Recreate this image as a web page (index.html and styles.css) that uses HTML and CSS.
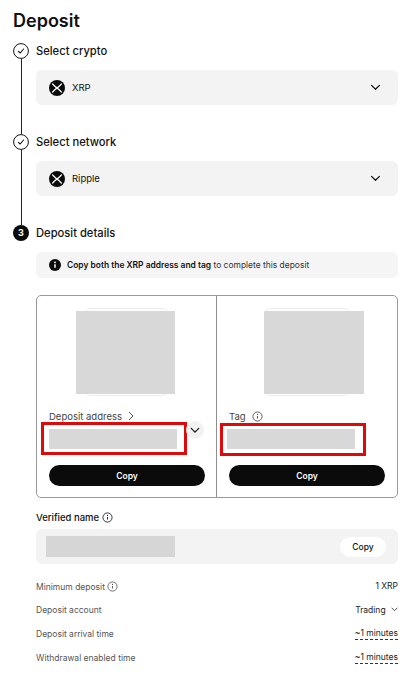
FILE: index.html
```html
<!DOCTYPE html>
<html lang="en">
<head>
    <meta charset="UTF-8">
    <meta name="viewport" content="width=device-width, initial-scale=1.0">
    <title>Deposit</title>
    <link rel="stylesheet" href="styles.css">
</head>
<body>
    <svg class="icon-defs" width="0" height="0">
        <symbol id="chevron" viewBox="0 0 12 8"><path d="M1.5 1.5 6 6l4.5-4.5" fill="none" stroke="currentColor" stroke-width="1.4" stroke-linecap="round" stroke-linejoin="round"/></symbol>
        <symbol id="check" viewBox="0 0 16 16"><circle cx="8" cy="8" r="7.4" fill="#fff" stroke="#111" stroke-width="1"/><path d="M5.4 8.3 7.2 10l3.4-4" fill="none" stroke="#111" stroke-width="1.1" stroke-linecap="round" stroke-linejoin="round"/></symbol>
        <symbol id="xrp" viewBox="0 0 16 16"><circle cx="8" cy="8" r="8" fill="#0b0b0b"/><path d="M3.6 4 6.6 7a2 2 0 0 0 2.8 0l3-3M3.6 12l3-3a2 2 0 0 1 2.8 0l3 3" fill="none" stroke="#fff" stroke-width="1.2" stroke-linecap="round"/></symbol>
        <symbol id="info" viewBox="0 0 12 12"><circle cx="6" cy="6" r="5" fill="none" stroke="currentColor" stroke-width="0.9"/><path d="M6 5.4v2.8" stroke="currentColor" stroke-width="1"/><circle cx="6" cy="3.7" r="0.6" fill="currentColor"/></symbol>
    </svg>

    <h1 class="page-title">Deposit</h1>

    <section class="step">
        <div class="step-marker">
            <svg class="step-icon"><use href="#check"/></svg>
            <div class="step-line"></div>
        </div>
        <div class="step-body step-body-select">
            <h2 class="step-title">Select crypto</h2>
            <div class="select-box">
                <svg class="coin-icon"><use href="#xrp"/></svg>
                <span class="select-text">XRP</span>
                <svg class="select-chevron"><use href="#chevron"/></svg>
            </div>
        </div>
    </section>

    <section class="step">
        <div class="step-marker">
            <svg class="step-icon"><use href="#check"/></svg>
            <div class="step-line"></div>
        </div>
        <div class="step-body step-body-select">
            <h2 class="step-title">Select network</h2>
            <div class="select-box">
                <svg class="coin-icon"><use href="#xrp"/></svg>
                <span class="select-text">Ripple</span>
                <svg class="select-chevron"><use href="#chevron"/></svg>
            </div>
        </div>
    </section>

    <section class="step">
        <div class="step-marker">
            <div class="step-number">3</div>
        </div>
        <div class="step-body">
            <h2 class="step-title">Deposit details</h2>
            <div class="notice">
                <svg class="notice-icon" viewBox="0 0 12 12"><circle cx="6" cy="6" r="6" fill="#0b0b0b"/><path d="M6 5.3v3.4" stroke="#fff" stroke-width="1.5"/><circle cx="6" cy="3.4" r="0.9" fill="#fff"/></svg>
                <span><b>Copy both the XRP address and tag</b> to complete this deposit</span>
            </div>

            <div class="address-card">
                <div class="address-col">
                    <div class="qr-wrap">
                        <div class="qr-frame qr-frame-left"></div>
                        <div class="qr-mask"></div>
                    </div>
                    <div class="field-label">Deposit address
                        <svg class="label-arrow" viewBox="0 0 6 10"><path d="M1 1l4 4-4 4" fill="none" stroke="currentColor" stroke-width="0.9"/></svg>
                    </div>
                    <div class="field-row">
                        <div class="field-value"></div>
                        <div class="red-box"></div>
                        <div class="expand-btn"><svg class="expand-chevron"><use href="#chevron"/></svg></div>
                    </div>
                    <button class="copy-btn">Copy</button>
                </div>
                <div class="address-col address-col-right">
                    <div class="qr-wrap">
                        <div class="qr-frame qr-frame-right"></div>
                        <div class="qr-mask"></div>
                    </div>
                    <div class="field-label">Tag
                        <svg class="info-icon"><use href="#info"/></svg>
                    </div>
                    <div class="field-row">
                        <div class="field-value"></div>
                        <div class="red-box"></div>
                    </div>
                    <button class="copy-btn">Copy</button>
                </div>
            </div>

            <div class="verified-label">Verified name <svg class="info-icon"><use href="#info"/></svg></div>
            <div class="verified-box">
                <div class="verified-value"></div>
                <button class="copy-pill">Copy</button>
            </div>

            <div class="info-rows">
                <div class="info-row">
                    <span class="info-key">Minimum deposit <svg class="info-icon"><use href="#info"/></svg></span>
                    <span class="info-val">1 XRP</span>
                </div>
                <div class="info-row">
                    <span class="info-key">Deposit account</span>
                    <span class="info-val">Trading <svg class="mini-chevron"><use href="#chevron"/></svg></span>
                </div>
                <div class="info-row">
                    <span class="info-key">Deposit arrival time</span>
                    <span class="info-val dashed">~1 minutes</span>
                </div>
                <div class="info-row">
                    <span class="info-key">Withdrawal enabled time</span>
                    <span class="info-val dashed">~1 minutes</span>
                </div>
            </div>
        </div>
    </section>
</body>
</html>
```

FILE: styles.css
```css
* {
    box-sizing: border-box;
}

body {
    margin: 0;
    padding: 9px 13px 14px 13px;
    background-color: #ffffff;
    color: #111111;
    font-family: 'Inter', 'Liberation Sans', sans-serif;
}

.icon-defs {
    position: absolute;
}

.page-title {
    margin: 0 0 11px 0;
    height: 23px;
    line-height: 23px;
    font-size: 18px;
    font-weight: 600;
}

.step {
    display: flex;
    gap: 7px;
}

.step-marker {
    width: 16px;
    flex-shrink: 0;
    display: flex;
    flex-direction: column;
    align-items: center;
}

.step-icon {
    width: 16px;
    height: 16px;
    flex-shrink: 0;
}

.step-line {
    width: 1px;
    flex: 1;
    background-color: #222222;
}

.step-number {
    width: 16px;
    height: 16px;
    border-radius: 50%;
    background-color: #0b0b0b;
    color: #ffffff;
    font-size: 9px;
    font-weight: 700;
    line-height: 16px;
    text-align: center;
}

.step-body {
    flex: 1;
    min-width: 0;
}

.step-body-select {
    padding-bottom: 29px;
}

.step-title {
    margin: 0 0 11px 0;
    height: 16px;
    line-height: 16px;
    font-size: 11.2px;
    font-weight: 500;
}

.select-box {
    height: 35px;
    display: flex;
    align-items: center;
    padding: 0 17px 0 13px;
    background-color: #f3f3f3;
    border-radius: 6px;
}

.coin-icon {
    width: 16px;
    height: 16px;
    margin-right: 7px;
}

.select-text {
    font-size: 9.5px;
    font-weight: 400;
}

.select-chevron {
    width: 11px;
    height: 7px;
    margin-left: auto;
}

.notice {
    height: 26px;
    display: flex;
    align-items: center;
    gap: 6px;
    padding-left: 13px;
    background-color: #f5f5f5;
    border-radius: 6px;
    font-size: 8.45px;
    color: #333333;
    white-space: nowrap;
}

.notice b {
    font-weight: 600;
    color: #111111;
}

.notice-icon {
    width: 12px;
    height: 12px;
    flex-shrink: 0;
}

.address-card {
    display: flex;
    height: 203px;
    margin-top: 17px;
    border: 1px solid #9a9a9a;
    border-radius: 5px;
}

.address-col {
    width: 180px;
    padding: 12px 11px 0 12px;
    border-right: 1px solid #8f8f8f;
}

.address-col-right {
    flex: 1;
    border-right: none;
    padding: 12px 12px 0 12px;
}

.qr-wrap {
    position: relative;
    height: 88px;
}

.qr-frame {
    position: absolute;
    top: 0;
    height: 88px;
    border: 1px solid #ececec;
    border-radius: 7px;
}

.qr-frame-left {
    left: 35px;
    width: 85px;
}

.qr-frame-right {
    left: 35px;
    width: 87px;
}

.qr-mask {
    position: absolute;
    top: 3px;
    left: 27px;
    width: 99px;
    height: 83px;
    background-color: #d8d8d8;
}

.address-col-right .qr-mask {
    left: 35px;
    width: 100px;
}

.field-label {
    display: flex;
    align-items: center;
    gap: 6px;
    height: 14px;
    margin-top: 13px;
    font-size: 9.5px;
    color: #444444;
}

.label-arrow {
    width: 6px;
    height: 10px;
}

.info-icon {
    width: 11px;
    height: 11px;
    vertical-align: -2px;
}

.field-row {
    position: relative;
    height: 26px;
    padding-top: 6px;
}

.field-value {
    width: 128px;
    height: 20px;
    background-color: #d8d8d8;
}

.address-col-right .field-value {
    margin-left: -2px;
}

/* annotation drawn over the screenshot */
.red-box {
    position: absolute;
    top: -1px;
    left: -8px;
    width: 146px;
    height: 33px;
    border: 3px solid #de0a0a;
}

.address-col-right .red-box {
    left: -9px;
    top: 0;
}

.expand-btn {
    position: absolute;
    top: -2px;
    left: 137px;
    width: 18px;
    height: 18px;
    display: flex;
    align-items: center;
    justify-content: center;
    border-radius: 50%;
    background-color: #f2f2f2;
}

.expand-chevron {
    width: 10px;
    height: 7px;
}

.copy-btn {
    display: block;
    width: 156px;
    height: 21px;
    margin-top: 16px;
    border: none;
    border-radius: 11px;
    background-color: #0b0b0b;
    color: #ffffff;
    font-family: inherit;
    font-size: 8.5px;
    font-weight: 600;
}

.verified-label {
    height: 14px;
    line-height: 14px;
    margin-top: 13px;
    font-size: 9.5px;
    font-weight: 500;
}

.verified-box {
    height: 35px;
    margin-top: 4px;
    display: flex;
    align-items: center;
    justify-content: space-between;
    padding: 0 12px 0 10px;
    background-color: #f3f3f3;
    border-radius: 6px;
}

.verified-value {
    width: 129px;
    height: 21px;
    background-color: #d6d6d6;
}

.copy-pill {
    width: 46px;
    height: 20px;
    border: none;
    border-radius: 10px;
    background-color: #ffffff;
    color: #111111;
    font-family: inherit;
    font-size: 8.5px;
    font-weight: 500;
}

.info-rows {
    margin-top: 15px;
    display: flex;
    flex-direction: column;
    gap: 10px;
}

.info-row {
    display: flex;
    justify-content: space-between;
    align-items: center;
    height: 14px;
    font-size: 8.5px;
}

.info-key {
    color: #555555;
}

.info-val {
    color: #222222;
}

.mini-chevron {
    width: 7px;
    height: 5px;
    margin-left: 3px;
    vertical-align: 1px;
}

.dashed {
    border-bottom: 1px dashed #333333;
    padding-bottom: 1px;
}
```
